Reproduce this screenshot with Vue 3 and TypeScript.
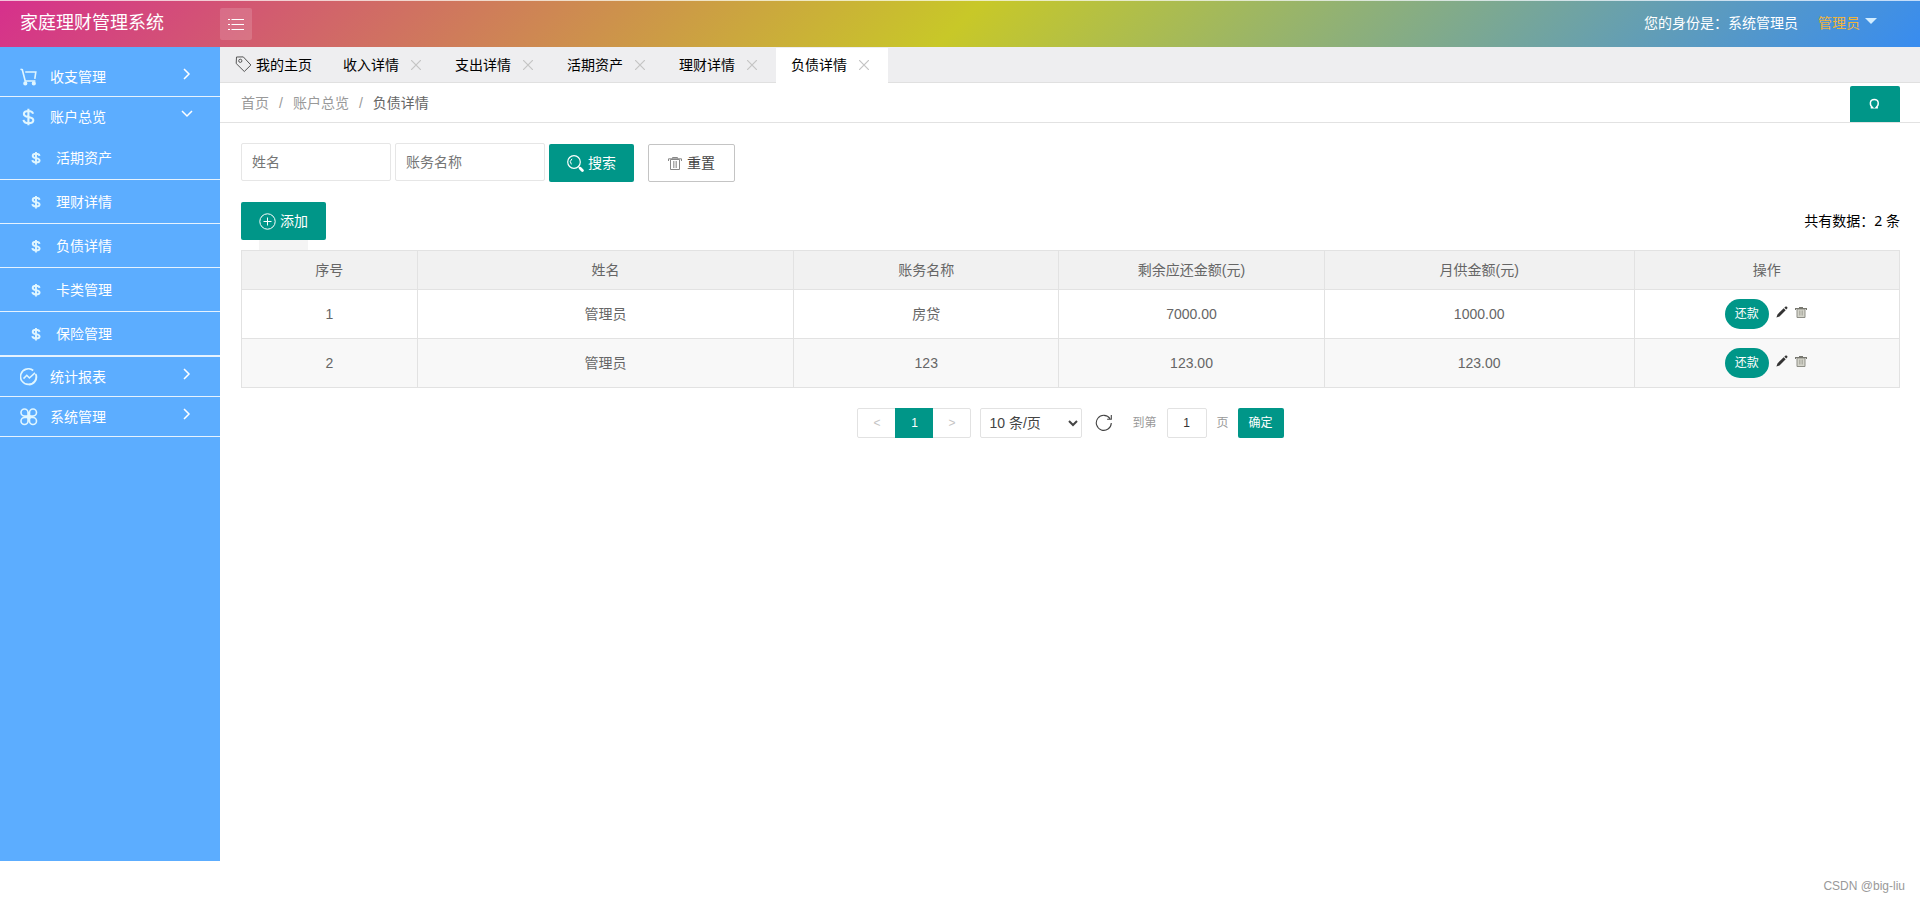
<script setup lang="ts">
import { ref } from 'vue'

interface MenuItem {
  title: string
  icon: 'cart' | 'dollar' | 'chart' | 'clover'
  children: string[]
  open: boolean
}

interface Debt {
  id: number
  owner: string
  account: string
  remaining: string
  monthly: string
}

const menu = ref<MenuItem[]>([
  { title: '收支管理', icon: 'cart', children: [], open: false },
  {
    title: '账户总览',
    icon: 'dollar',
    children: ['活期资产', '理财详情', '负债详情', '卡类管理', '保险管理'],
    open: true,
  },
  { title: '统计报表', icon: 'chart', children: [], open: false },
  { title: '系统管理', icon: 'clover', children: [], open: false },
])

const tabs = ref<string[]>(['收入详情', '支出详情', '活期资产', '理财详情', '负债详情'])
const activeTab = ref('负债详情')

const columns = ['序号', '姓名', '账务名称', '剩余应还金额(元)', '月供金额(元)', '操作']

const rows = ref<Debt[]>([
  { id: 1, owner: '管理员', account: '房贷', remaining: '7000.00', monthly: '1000.00' },
  { id: 2, owner: '管理员', account: '123', remaining: '123.00', monthly: '123.00' },
])

const ownerQuery = ref('')
const accountQuery = ref('')
const pageNumber = ref('1')

function closeTab(name: string) {
  tabs.value = tabs.value.filter((t) => t !== name)
}

function resetSearch() {
  ownerQuery.value = ''
  accountQuery.value = ''
}
</script>

<template>
  <div class="app">
    <header class="topbar">
      <h1 class="brand">家庭理财管理系统</h1>
      <button class="toggle" type="button" aria-label="展开或收起菜单">
        <svg width="18" height="14" viewBox="0 0 18 14" fill="none" stroke="currentColor" stroke-width="1.2">
          <path d="M1 2.500h2M4.500 2.500h12.500M1 7.500h2M4.500 7.500h12.500M1 12.500h2M4.500 12.500h12.500" />
        </svg>
      </button>
      <span class="identity">您的身份是：系统管理员</span>
      <button class="user" type="button">
        管理员
        <svg width="12" height="10" viewBox="0 0 12 10"><path d="M0 0h12l-6 6z" fill="#d2edff" /></svg>
      </button>
    </header>

    <div class="body">
      <nav class="sidebar">
        <ul class="menu">
          <li v-for="item in menu" :key="item.title" class="menu-item">
            <a href="#" class="menu-link" @click.prevent="item.open = !item.open">
              <svg class="menu-icon" width="18" height="18" viewBox="0 0 18 18" fill="none" stroke="currentColor" stroke-width="1.6">
                <g v-if="item.icon === 'cart'">
                  <path d="M.5 1.200l1.800.5 2.900 11.300h10.200M5.200 4h10.600l-1 6.800" />
                  <circle cx="5.300" cy="15.400" r="1.300" fill="currentColor" />
                  <circle cx="13.800" cy="15.400" r="1.300" fill="currentColor" />
                </g>
                <g v-else-if="item.icon === 'dollar'" stroke-width="2.100">
                  <path d="M13 5.800C12.600 3.800 11 3 8.400 3 5.800 3 3.900 4 3.900 5.900c0 4.400 9.400 1.700 9.400 6.300 0 2-2 3-4.800 3-2.900 0-4.700-1.100-5-3.300M8.400.8v16.400" />
                </g>
                <g v-else-if="item.icon === 'chart'">
                  <path d="M15.700 6A7.800 7.800 0 1 1 13.200 2.500M9 16.800A7.800 7.800 0 0 0 16.200 7" />
                  <path d="M3.500 10.600L6.800 7.300l2.600 2.700 5.600-5.200" />
                </g>
                <g v-else>
                  <path d="M8 8H4.500A3.500 3.500 0 1 1 8 4.500zM9.500 8h3.500A3.500 3.500 0 1 0 9.500 4.500zM8 9.500H4.500A3.500 3.500 0 1 0 8 13zM9.500 9.500h3.500A3.500 3.500 0 1 1 9.500 13z" />
                  <path d="M8 8h2v2H8z" fill="currentColor" />
                </g>
              </svg>
              <span>{{ item.title }}</span>
              <svg class="arrow" width="12" height="12" viewBox="0 0 12 12" fill="none" stroke="currentColor" stroke-width="1.500">
                <path v-if="item.open" d="M1 3l5 5 5-5" />
                <path v-else d="M3 1l5 5-5 5" />
              </svg>
            </a>
            <ul v-if="item.open && item.children.length" class="submenu">
              <li v-for="child in item.children" :key="child">
                <a href="#" class="sub-link" @click.prevent="activeTab = child">
                  <svg width="10" height="14" viewBox="0 0 10 14" fill="none" stroke="currentColor" stroke-width="1.900">
                    <path d="M8.500 4.800C8.300 3.400 7 2.800 5 2.800S1.700 3.600 1.700 4.900c0 3.100 6.900 1.300 6.900 4.500 0 1.400-1.500 2.100-3.600 2.100S1.500 10.700 1.300 9.200M5 1v12.500" />
                  </svg>
                  <span>{{ child }}</span>
                </a>
              </li>
            </ul>
          </li>
        </ul>
      </nav>

      <main class="content">
        <div class="tabs">
          <div class="tab home">
            <button type="button" class="tab-name">
              <svg width="17" height="17" viewBox="0 0 17 17" fill="none" stroke="#555" stroke-width="1">
                <path d="M1.500 1l6.800-.1 7.600 8.100-6.600 6.500L1.200 7.500z" stroke-linejoin="round" />
                <circle cx="5.300" cy="4.800" r="1.600" />
              </svg>
              我的主页
            </button>
          </div>
          <div v-for="tab in tabs" :key="tab" class="tab" :class="{ active: tab === activeTab }">
            <button type="button" class="tab-name" @click="activeTab = tab">{{ tab }}</button>
            <button type="button" class="tab-close" :aria-label="'关闭' + tab" @click="closeTab(tab)">
              <svg width="10" height="10" viewBox="0 0 10 10" stroke="currentColor" stroke-width="1.200"><path d="M0 0l10 10M10 0L0 10" /></svg>
            </button>
          </div>
        </div>

        <div class="crumbs">
          <a href="#">首页</a><span class="sep">/</span><a href="#">账户总览</a><span class="sep">/</span><a href="#" class="current">负债详情</a>
          <button class="refresh" type="button" aria-label="刷新">
            <svg width="12" height="12" viewBox="0 0 12 12" fill="none" stroke="currentColor" stroke-width="1.400">
              <path d="M1.700 9.800h2C.2 7 .5 1.500 5.300 1.500s5.100 5.500 1.600 8.300h2" />
            </svg>
          </button>
        </div>

        <section class="page">
          <form class="search" @submit.prevent>
            <input v-model="ownerQuery" type="text" placeholder="姓名" aria-label="姓名" />
            <input v-model="accountQuery" type="text" placeholder="账务名称" aria-label="账务名称" />
            <button class="btn" type="submit">
              <svg width="17" height="17" viewBox="0 0 17 17" fill="none" stroke="currentColor">
                <circle cx="7" cy="7" r="6.300" stroke-width="1.200" />
                <path d="M5 3.800a4 4 0 0 0-.6 5.600" />
                <path d="M11.800 11.800l1 1" stroke-width="1.200" />
                <path d="M13.200 13.200l2.200 2.200" stroke-width="2.800" stroke-linecap="round" />
              </svg>
              搜索
            </button>
            <button class="btn plain" type="button" @click="resetSearch">
              <svg width="14" height="14" viewBox="0 0 14 14" fill="none" stroke="#888">
                <path d="M2.500 3.500h9v10h-9z" />
                <path d="M5.500 5v7M7 5v7M8.500 5v7" stroke="#aaa" />
                <path d="M.5 5V2.800h13V5M4.500 2.500V1.500h5v1" />
              </svg>
              重置
            </button>
          </form>

          <div class="toolbar">
            <button class="btn add" type="button">
              <svg width="17" height="17" viewBox="0 0 17 17" fill="none" stroke="currentColor" stroke-width="1">
                <circle cx="8.500" cy="8.500" r="7.700" /><path d="M8.500 4.500v8M4.500 8.500h8" />
              </svg>
              添加
            </button>
            <span class="total">共有数据：2 条</span>
          </div>
          <div class="stub"></div>

          <table class="grid">
            <colgroup>
              <col class="c-no" /><col class="c-name" /><col class="c-mid" /><col class="c-mid" /><col class="c-month" /><col class="c-mid" />
            </colgroup>
            <thead>
              <tr><th v-for="c in columns" :key="c" scope="col">{{ c }}</th></tr>
            </thead>
            <tbody>
              <tr v-for="row in rows" :key="row.id">
                <td>{{ row.id }}</td>
                <td>{{ row.owner }}</td>
                <td>{{ row.account }}</td>
                <td>{{ row.remaining }}</td>
                <td>{{ row.monthly }}</td>
                <td>
                  <div class="actions">
                    <button class="pill" type="button">还款</button>
                    <button class="icon-btn" type="button" aria-label="编辑">
                      <svg width="12" height="12" viewBox="0 0 12 12"><path d="M.4 11.600l1.200-3.400L7.700 2.300l2 1.900-6.200 6.300zM8.300 1.700L9.600.6q.8-.3 1.400.2t.4 1.400l-1.100 1.400z" fill="#333" /></svg>
                    </button>
                    <button class="icon-btn" type="button" aria-label="删除">
                      <svg width="12" height="12" viewBox="0 0 12 12" fill="none">
                        <path d="M2 3h8v8.500H2z" fill="#d4d4ca" stroke="#8e8e86" />
                        <path d="M4.500 4.500v5M6 4.500v5M7.500 4.500v5" stroke="#b0b0a6" />
                        <path d="M0 2.500h12M.5 2v2M11.500 2v2M4 1.500h4" stroke="#77776f" />
                      </svg>
                    </button>
                  </div>
                </td>
              </tr>
            </tbody>
          </table>

          <div class="pager">
            <div class="pages">
              <button type="button" disabled aria-label="上一页">&lt;</button>
              <button type="button" class="on">1</button>
              <button type="button" disabled aria-label="下一页">&gt;</button>
            </div>
            <select class="size" aria-label="每页条数">
              <option>10 条/页</option>
              <option>20 条/页</option>
              <option>50 条/页</option>
            </select>
            <button class="reload" type="button" aria-label="重新加载">
              <svg width="18" height="18" viewBox="0 0 18 18" fill="none" stroke="#444" stroke-width="1.100">
                <path d="M16.300 9A7.500 7.500 0 1 1 15 4.600M16.300 1v4.300h-4.200" />
              </svg>
            </button>
            <label class="jump">
              到第
              <input v-model="pageNumber" type="text" />
              页
            </label>
            <button class="confirm" type="button">确定</button>
          </div>
        </section>
      </main>
    </div>

    <footer class="footer">CSDN @big-liu</footer>
  </div>
</template>

<style>
body {
  margin: 0;
  background: #fff;
}
</style>

<style scoped>
.app {
  display: flex;
  flex-direction: column;
  min-height: 100vh;
  font: 14px/20px "Liberation Sans", "Noto Sans CJK SC", sans-serif;
  color: #000;
}

.app *,
.app {
  box-sizing: border-box;
}

button,
input,
select {
  font: inherit;
  margin: 0;
}

button {
  display: inline-flex;
  align-items: center;
  justify-content: center;
  padding: 0;
  border: 0;
  background: none;
  color: inherit;
  cursor: pointer;
}

a {
  color: inherit;
  text-decoration: none;
}

ul {
  list-style: none;
  margin: 0;
  padding: 0;
}

svg {
  flex: none;
}

.topbar {
  display: flex;
  align-items: center;
  height: 47px;
  padding-right: 43px;
  border-top: 1px solid rgba(255, 255, 255, 0.7);
  background: linear-gradient(135deg, #d6308c, #c8c828 50%, #388cf0);
  color: #fff;
}

.brand {
  width: 220px;
  margin: 0;
  padding: 0 0 2px 20px;
  font-size: 18px;
  line-height: 24px;
  font-weight: 400;
}

.toggle {
  width: 32px;
  height: 32px;
  border-radius: 2px;
  background: rgba(255, 255, 255, 0.15);
}

.identity {
  margin-left: auto;
  padding-bottom: 2px;
}

.user {
  gap: 5px;
  margin-left: 20px;
  padding-bottom: 2px;
  color: #f0b43c;
}

.body {
  display: flex;
  flex: 1;
}

.sidebar {
  width: 220px;
  flex: none;
  padding-top: 10px;
  background: #5cadff;
  color: #fff;
}

.menu-item {
  border-bottom: 1px solid #e6f3ff;
}

.menu-link {
  display: flex;
  align-items: center;
  gap: 12px;
  height: 39px;
  padding: 0 27px 0 20px;
}

.menu-icon,
.sub-link svg {
  color: #e0f6ff;
}

.arrow {
  margin: 0 0 5px auto;
}

.sub-link {
  display: flex;
  align-items: center;
  gap: 15px;
  height: 44px;
  padding-left: 31px;
  border-bottom: 1px solid #e6f3ff;
}

.content {
  flex: 1;
  min-width: 0;
}

.tabs {
  display: flex;
  align-items: flex-end;
  height: 36px;
  border-bottom: 1px solid #e0e0e0;
  background: #eeeef0;
}

.tab {
  display: flex;
  align-items: center;
  gap: 12px;
  height: 34px;
  padding: 0 19px 1px 15px;
}

.tab:not(.home) {
  width: 112px;
}

.tab.home {
  padding-right: 16px;
}

.tab-name {
  gap: 4px;
  white-space: nowrap;
}

.tab-close {
  color: #c4c4c4;
}

.tab.active {
  height: 35px;
  margin-bottom: -1px;
  padding-bottom: 2px;
  background: #fff;
}

.crumbs {
  display: flex;
  align-items: center;
  height: 40px;
  padding: 0 20px 0 21px;
  border-bottom: 1px solid #e2e2e2;
  color: #999;
}

.sep {
  margin: 0 10px;
}

.current {
  color: #666;
}

.refresh {
  align-self: flex-end;
  width: 50px;
  height: 36px;
  margin-left: auto;
  border-radius: 2px 2px 0 0;
  background: #009688;
  color: #fff;
}

.page {
  padding: 20px 20px 0 21px;
}

.search {
  display: flex;
  align-items: flex-end;
  gap: 4px;
  height: 39px;
}

.search input {
  width: 150px;
  height: 38px;
  margin-bottom: 1px;
  padding: 0 10px;
  border: 1px solid #e6e6e6;
  border-radius: 2px;
  background: #fff;
  outline: 0;
}

.search input::placeholder {
  color: #757575;
  opacity: 1;
}

.btn {
  gap: 4px;
  height: 38px;
  padding: 0 18px;
  border-radius: 2px;
  background: #009688;
  color: #fff;
  white-space: nowrap;
}

.btn.plain {
  gap: 5px;
  margin-left: 10px;
  padding: 0 19px;
  border: 1px solid #c4c4c4;
  background: #fff;
  color: #444;
}

.toolbar {
  display: flex;
  align-items: center;
  justify-content: space-between;
  margin-top: 20px;
}

.total {
  font-family: "Noto Sans", "Noto Sans CJK SC", sans-serif;
}

.stub {
  width: 49px;
  height: 10px;
  margin-left: 18px;
  background: #f4f4f4;
}

.grid {
  width: 100%;
  table-layout: fixed;
  border-collapse: collapse;
  color: #666;
}

.c-no {
  width: 10.6%;
}

.c-name {
  width: 22.7%;
}

.c-mid {
  width: 16%;
}

.c-month {
  width: 18.7%;
}

.grid th,
.grid td {
  height: 49px;
  padding: 0;
  border: 1px solid #e2e2e2;
  text-align: center;
  font-weight: 400;
}

.grid th {
  height: 39px;
  background: #f1f1f1;
}

.grid tbody tr:nth-child(even) {
  background: #f8f8f8;
}

.actions {
  display: flex;
  align-items: center;
  justify-content: center;
  padding-right: 2px;
}

.pill {
  height: 30px;
  padding: 0 10px;
  border-radius: 15px;
  background: #009688;
  color: #fff;
  font-size: 12px;
}

.icon-btn {
  margin: 0 0 4px 7px;
}

.pager {
  display: flex;
  align-items: center;
  justify-content: center;
  margin-top: 20px;
  font-size: 12px;
}

.pages {
  display: flex;
  border: 1px solid #e2e2e2;
  border-radius: 2px;
}

.pages button {
  width: 37px;
  height: 28px;
  color: #c4c4c4;
}

.pages .on {
  width: 38px;
  height: 30px;
  margin: -1px 0;
  background: #009688;
  color: #fff;
}

.size {
  width: 102px;
  height: 30px;
  margin-left: 9px;
  padding: 0 4px;
  border: 1px solid #e2e2e2;
  border-radius: 2px;
  background: #fff;
  color: #444;
  font-size: 14px;
}

.reload {
  margin-left: 13px;
}

.jump {
  display: flex;
  align-items: center;
  gap: 10px;
  margin-left: 19px;
  color: #999;
}

.jump input {
  width: 40px;
  height: 30px;
  padding: 0;
  border: 1px solid #e2e2e2;
  border-radius: 2px;
  color: #333;
  text-align: center;
}

.confirm {
  width: 46px;
  height: 30px;
  margin-left: 9px;
  border-radius: 2px;
  background: #009688;
  color: #fff;
}

.footer {
  height: 41px;
  padding: 15px 15px 0 0;
  color: #999;
  font-size: 12px;
  text-align: right;
}
</style>
